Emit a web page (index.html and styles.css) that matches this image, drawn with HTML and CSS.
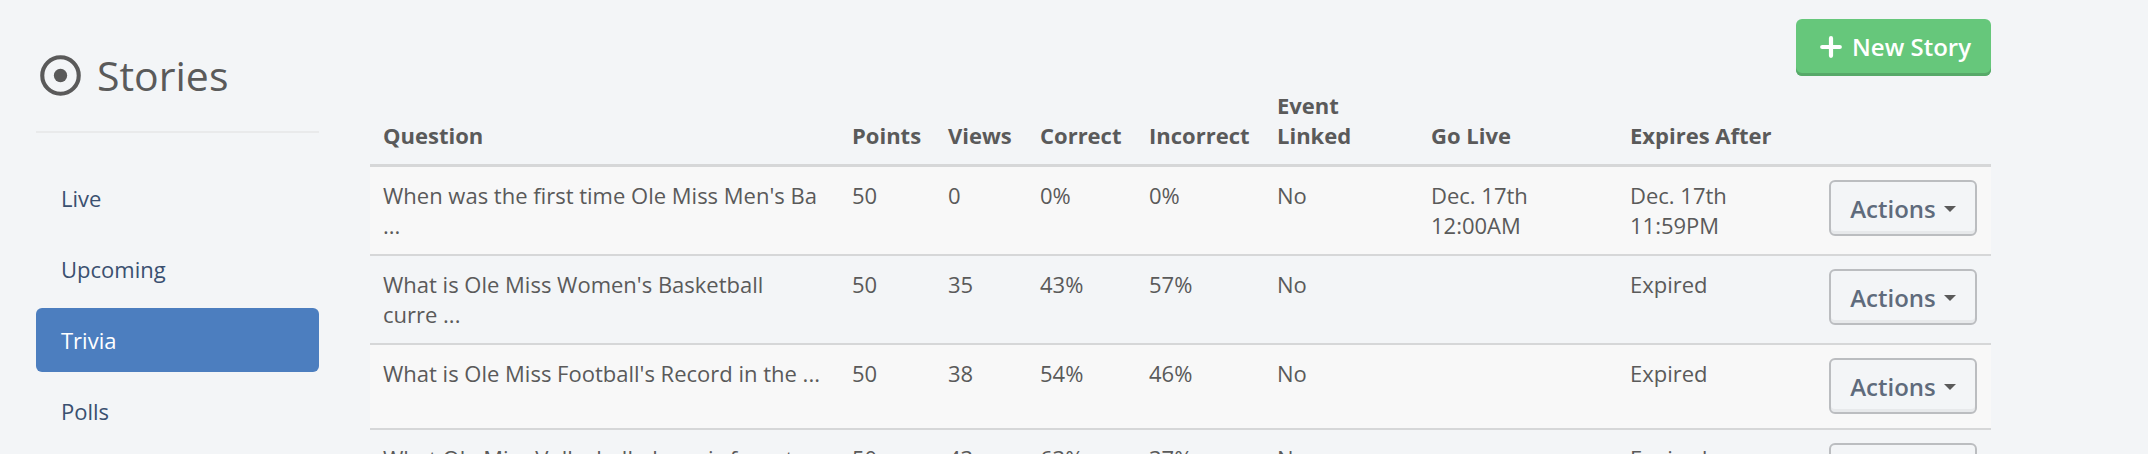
FILE: index.html
```html
<!DOCTYPE html>
<html lang="en">
<head>
<meta charset="utf-8">
<title>Stories</title>
<link rel="stylesheet" href="styles.css">
</head>
<body>
<div class="page">
  <aside class="sidebar">
    <h1 class="title">
      <svg class="title-icon" viewBox="0 0 40 40" aria-hidden="true"><circle cx="20" cy="20" r="17.8" fill="none" stroke="currentColor" stroke-width="4"/><circle cx="20" cy="20" r="6.5" fill="currentColor"/></svg>
      Stories
    </h1>
    <nav class="nav">
      <a class="nav-link" href="#live">Live</a>
      <a class="nav-link" href="#upcoming">Upcoming</a>
      <a class="nav-link active" href="#trivia" aria-current="page">Trivia</a>
      <a class="nav-link" href="#polls">Polls</a>
    </nav>
  </aside>
  <main class="main">
    <div class="toolbar">
      <button class="new-story" type="button">
        <svg class="plus" viewBox="0 0 22 22" aria-hidden="true"><path d="M11 2.2v17.6M2.2 11h17.6" fill="none" stroke="currentColor" stroke-width="4.2" stroke-linecap="round"/></svg>
        New Story
      </button>
    </div>
    <table class="stories">
      <colgroup>
        <col class="c-question"><col class="c-points"><col class="c-views"><col class="c-correct"><col class="c-incorrect"><col class="c-event"><col class="c-date"><col class="c-date"><col class="c-actions">
      </colgroup>
      <thead>
        <tr><th>Question</th><th>Points</th><th>Views</th><th>Correct</th><th>Incorrect</th><th>Event<br>Linked</th><th>Go Live</th><th>Expires After</th><th></th></tr>
      </thead>
      <tbody>
        <tr><td class="question">When was the first time Ole Miss Men's Ba ...</td><td>50</td><td>0</td><td>0%</td><td>0%</td><td>No</td><td>Dec. 17th<br>12:00AM</td><td>Dec. 17th<br>11:59PM</td><td><button class="actions" type="button">Actions<span class="caret"></span></button></td></tr>
        <tr><td class="question">What is Ole Miss Women's Basketball curre ...</td><td>50</td><td>35</td><td>43%</td><td>57%</td><td>No</td><td></td><td>Expired</td><td><button class="actions" type="button">Actions<span class="caret"></span></button></td></tr>
        <tr><td class="question">What is Ole Miss Football's Record in the ...</td><td>50</td><td>38</td><td>54%</td><td>46%</td><td>No</td><td></td><td>Expired</td><td><button class="actions" type="button">Actions<span class="caret"></span></button></td></tr>
        <tr><td class="question">What Ole Miss Volleyball player is from t ...</td><td>50</td><td>43</td><td>63%</td><td>37%</td><td>No</td><td></td><td>Expired</td><td><button class="actions" type="button">Actions<span class="caret"></span></button></td></tr>
      </tbody>
    </table>
  </main>
</div>
</body>
</html>
```
FILE: styles.css
```css
* { box-sizing: border-box; }
body {
  margin: 0;
  background: #f3f5f7;
  color: #5a5a5a;
  font: 22px/30px "Open Sans", sans-serif;
}
html { scrollbar-width: none; }
button { font: inherit; cursor: pointer; }
.page {
  display: flex;
  align-items: flex-start;
  gap: 51px;
  padding: 19px 157px 0 36px;
}
.sidebar { flex: none; width: 283px; }
.title {
  display: flex;
  align-items: center;
  gap: 16px;
  margin: 0;
  padding: 28px 0;
  border-bottom: 2px solid #e9eaeb;
  font-size: 41px;
  line-height: 56px;
  font-weight: 400;
}
.title-icon { width: 41px; height: 41px; }
.nav {
  display: flex;
  flex-direction: column;
  gap: 7px;
  padding-top: 33px;
}
.title-icon { margin-left: 4px; }
.nav-link {
  padding: 17px 25px;
  border-radius: 6px;
  color: #3a5070;
  text-decoration: none;
}
.nav-link.active { background: #4c7ebf; color: #fff; }
.main { flex: 1; min-width: 0; }
.toolbar { display: flex; justify-content: flex-end; }
.new-story {
  display: flex;
  align-items: center;
  gap: 10px;
  height: 57px;
  padding: 0 20px 1px 24px;
  border: 0;
  border-radius: 6px;
  background: #66c77b;
  box-shadow: inset 0 -3px 0 #57a969;
  color: #fff;
  font-size: 24px;
  font-weight: 600;
}
.plus { width: 22px; height: 22px; }
.stories {
  width: 100%;
  margin-top: 1px;
  border-collapse: separate;
  border-spacing: 0;
  table-layout: fixed;
}
.c-points { width: 96px; }
.c-views { width: 92px; }
.c-correct { width: 109px; }
.c-incorrect { width: 128px; }
.c-event { width: 154px; }
.c-date { width: 199px; }
.c-actions { width: 175px; }
th, td {
  padding: 13px 13px 14px;
  text-align: left;
  vertical-align: top;
}
.question { padding-right: 18px; }
th {
  vertical-align: bottom;
  border-bottom: 3px solid #d6d7d8;
  font-weight: 700;
}
td { border-bottom: 2px solid #d6d7d8; }
tbody tr:nth-child(odd) { background: #f8f8f8; }
.actions {
  display: flex;
  align-items: center;
  justify-content: center;
  gap: 8px;
  width: 148px;
  height: 56px;
  padding: 2px 0 0;
  border: 2px solid #bbbdc0;
  border-radius: 6px;
  background: #f3f5f7;
  box-shadow: inset 0 -3px 0 #e7e9eb;
  color: #5f6b7c;
  font-size: 24px;
  font-weight: 600;
}
.caret {
  border: 6px solid transparent;
  border-top-color: #5a5a5a;
  border-bottom: 0;
}
```
